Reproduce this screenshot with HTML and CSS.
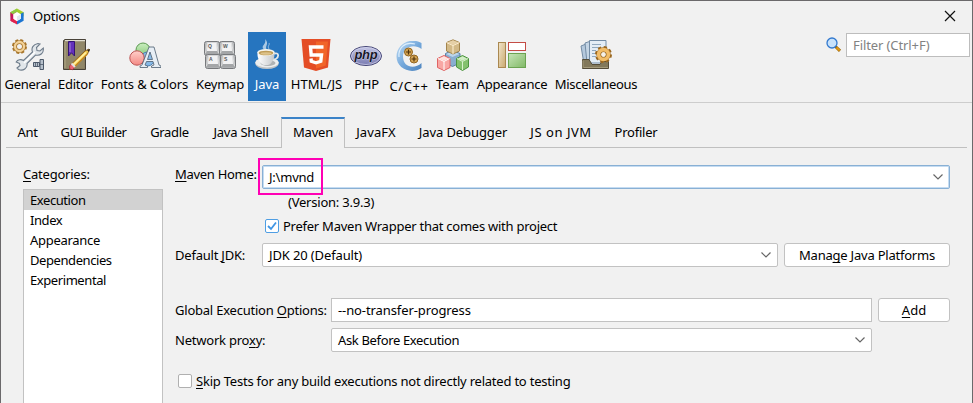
FILE: index.html
```
<!DOCTYPE html>
<html lang="en">
<head>
<meta charset="utf-8">
<title>Options</title>
<link rel="stylesheet" href="styles.css">
</head>
<body>
<div class="window">
  <header class="titlebar">
    <svg class="app-icon" viewBox="0 0 16 18">
      <path d="M8 .5 1 4.500V9l7-3z" fill="#b7d32c"/>
      <path d="M8 .5 15 4.500V9L8 5z" fill="#a5cf2d"/>
      <path d="M1 4.500V13.500L5 15.500V6L8 4z" fill="#c4175c"/>
      <path d="M1 4.500 8 .5V4L3.500 6.500z" fill="#8ecb45"/>
      <path d="M1 13.500 8 17.500V14L4 11z" fill="#e1224d"/>
      <path d="M15 4.500V13.500L8 17.500V13.500L12 11V6z" fill="#1b75d2"/>
      <path d="M8 4.300 12 6.600V11.400L8 13.800 4 11.400V6.600z" fill="#fff"/>
      <path d="M8 9 12 6.600V11.400L8 13.800z" fill="#dfe9ee"/>
    </svg>
    <span class="title tight">Options</span>
    <svg class="close" viewBox="0 0 12 12"><path d="M1 1 11 11M11 1 1 11" fill="none" stroke="#111" stroke-width="1.200"/></svg>
  </header>

  <div class="toolbar">
    <nav class="sections">
      <a class="section"><svg class="icon" viewBox="0 0 32 32">
        <circle cx="7.500" cy="7.500" r="6.300" fill="none" stroke="#a8762c" stroke-width="2.400" stroke-dasharray="2.900 2.050"/>
        <circle cx="7.500" cy="7.500" r="4.400" fill="none" stroke="#a8762c" stroke-width="3.800"/>
        <circle cx="7.500" cy="7.500" r="4.500" fill="none" stroke="#f3d298" stroke-width="2.300"/>
        <path d="M5 29 8 26.500 7.500 24.500 4.200 23C5.500 20.500 9 20 11.500 21.500L20.500 13C19 9 21 5.500 26 4.500L28 5 24.500 8.500 25 11.500 28 12 31.300 9C32 14 28.500 17 23.500 16L15 24.500C16 29 11 32.500 6.500 30.500z" fill="#e1e6ea" stroke="#6e7c8b" stroke-width="1.100"/>
        <path d="M12 24 23 13" stroke="#fff" stroke-width="1.500"/>
        <path d="M21.500 23.500H27.500V27.500H21.500zM28 20.500H31.500V30.500H28z" fill="#b6c0cb" stroke="#4c596a"/>
        <path d="M23.500 23.500V27.500M25.500 23.500V27.500M28 25.500H31.500" stroke="#4c596a" stroke-width=".8"/>
      </svg><span class="label tighter">General</span></a>

      <a class="section"><svg class="icon" viewBox="0 0 32 32">
        <path d="M3.500 1.500 5 .5H25.500V30.500H3.500z" fill="#83795d" stroke="#484238"/>
        <path d="M5 1.700H25" stroke="#eeeadd" stroke-width="1.200"/>
        <path d="M4.500 3H24.500V29.500H4.500z" fill="#918768"/>
        <path d="M5 3V29" stroke="#a69c7d" stroke-width="1.500"/>
        <path d="M8.500 2.500H14.500V17L11.500 13.800 8.500 17z" fill="#6431bc" stroke="#351474"/>
        <path d="M10 4V13" stroke="#a584d7"/>
        <path d="M9.500 30.500 11.500 25 25 12 29 10 29.500 10.500 27.500 15 14 28z" fill="#f3cb50" stroke="#8b5a16" stroke-width=".9"/>
        <path d="M13 26 26 13.500" stroke="#fff0a5" stroke-width="1.600"/>
        <path d="M15 27.500 27.500 15" stroke="#c88b22" stroke-width="1.100"/>
        <path d="M9.500 27 11.500 25 15 28 12.500 30.800 9.800 30z" fill="#ec6573" stroke="#a43141" stroke-width=".8"/>
        <path d="M11.500 24.500 15 28" stroke="#e2e4e5" stroke-width="1.800"/>
        <path d="M27 11 30 10 29 13z" fill="#292522"/>
      </svg><span class="label tight">Editor</span></a>

      <a class="section"><svg class="icon" viewBox="0 0 32 32">
        <defs>
          <linearGradient id="green" x2="0" y2="1"><stop stop-color="#caeec0"/><stop offset="1" stop-color="#86c875"/></linearGradient>
          <linearGradient id="red" x2="0" y2="1"><stop stop-color="#ffd0ca"/><stop offset="1" stop-color="#f38984"/></linearGradient>
        </defs>
        <circle cx="14" cy="11" r="7" fill="url(#green)" stroke="#5b9a51"/>
        <circle cx="18.500" cy="20" r="7" fill="#86b9e6" stroke="#4c7eb0"/>
        <circle cx="8" cy="19" r="7.200" fill="url(#red)" stroke="#bc5352"/>
        <path fill-rule="evenodd" d="M20 8H25L30 26 32 27V28.500H22.500V27L25 26 24 22.500H17.500L16 26 18.500 27V28.500H11V27L13 26zM21 13 18.500 20.500H23.500z" fill="#e7eef5" stroke="#4c5e70" stroke-width=".8"/>
      </svg><span class="label snug">Fonts &amp; Colors</span></a>

      <a class="section"><svg class="icon" viewBox="0 0 32 32">
        <defs>
          <g id="key"><rect x=".5" y=".5" width="15" height="14" rx="2" fill="#b9bbbd" stroke="#77797c"/><path d="M3.500 1.500H12.500L13 10H3z" fill="#f2f2f3"/><path d="M3 10H13L15 13.500H1z" fill="#a4a6a8"/><path d="M3.500 1.500 1.500 12M12.500 1.500 14.500 12" stroke="#e4e4e4" stroke-width=".8"/></g>
        </defs>
        <use href="#key" x="0" y="2"/><use href="#key" x="15" y="2"/>
        <use href="#key" x="1" y="15"/><use href="#key" x="16" y="15"/>
        <g class="key-text"><text x="4" y="8.500">Q</text><text x="19" y="8.500">W</text><text x="5" y="21.500">A</text><text x="20" y="21.500">S</text></g>
      </svg><span class="label tight">Keymap</span></a>

      <a class="section selected"><svg class="icon" viewBox="0 0 32 32">
        <defs><linearGradient id="cup"><stop stop-color="#fff"/><stop offset="1" stop-color="#c4c7c9"/></linearGradient></defs>
        <path d="M14 11C8 7 16 6 14 0 19 5 13 7 16 11z" fill="#d8e5f0" opacity=".75"/>
        <path d="M18 10C16 7 19 6 18 4" fill="none" stroke="#d8e5f0" opacity=".6"/>
        <ellipse cx="16" cy="24.500" rx="11.700" ry="5.500" fill="#bfc3c5"/>
        <ellipse cx="16" cy="23.500" rx="11.700" ry="5" fill="#eceeee"/>
        <ellipse cx="17" cy="24" rx="7.500" ry="3" fill="#aeb2b4"/>
        <path d="M22 15C29 12 29 20 21 21" fill="none" stroke="#e4e7e8" stroke-width="1.800"/>
        <path d="M6.500 13.500H23.500C24 19 21 25 17 26H13C9 25 6 19 6.500 13.500z" fill="url(#cup)"/>
        <ellipse cx="15" cy="13.500" rx="8.700" ry="3.400" fill="#f5f4ed"/>
        <ellipse cx="15" cy="14" rx="7.300" ry="2.300" fill="#bf9c57"/>
        <ellipse cx="15" cy="14.500" rx="5.500" ry="1.300" fill="#ddc28a"/>
      </svg><span class="label even">Java</span></a>

      <a class="section"><svg class="icon shift-left" viewBox="0 0 32 32">
        <path d="M1.500 0H30.500L28 28.500 16 32 4 28.500z" fill="#e44d26"/>
        <path d="M16 2.500H28L25.700 26.500 16 29.500z" fill="#f16529"/>
        <path d="M23.500 8H10.500L11.200 16H21.500L20.800 22.300 16 23.800 11.300 22.300 11 19.500" fill="none" stroke="#fff" stroke-width="3.400"/>
      </svg><span class="label wide">HTML/JS</span></a>

      <a class="section"><svg class="icon shift-left" viewBox="0 0 32 32">
        <defs><linearGradient id="php" x2="0" y2="1"><stop stop-color="#c4c6e6"/><stop offset="1" stop-color="#7779af"/></linearGradient></defs>
        <ellipse cx="16" cy="17" rx="15.500" ry="9.500" fill="url(#php)" stroke="#444575"/>
        <ellipse cx="16" cy="17" rx="14.500" ry="8.500" fill="none" stroke="#d6d7ef" stroke-width=".7"/>
        <text class="php-text" x="16" y="20">php</text>
      </svg><span class="label tight">PHP</span></a>

      <a class="section lower"><svg class="icon" viewBox="0 0 32 32">
        <defs><linearGradient id="cee" x2="1" y2="1"><stop stop-color="#c3def5"/><stop offset=".5" stop-color="#75a9dc"/><stop offset="1" stop-color="#4c83be"/></linearGradient></defs>
        <path d="M28.500 1V8C22 2.500 10 5 10 15.500S21 29 28.500 22V27C18 34 3.500 27.500 3.500 15.500S17-4.500 28.500 2z" fill="url(#cee)"/>
        <path d="M22 3C11 0 5 8 6 16" fill="none" stroke="#dceefd" stroke-width="1.200"/>
        <g fill="#d5a554" stroke="#916520"><circle cx="15.500" cy="11" r="4"/><circle cx="21" cy="18" r="4"/></g>
        <path d="M13 11H18M15.500 8.500V13.500M18.500 18H23.500M21 15.500V20.500" stroke="#51340c" stroke-width="1.200"/>
      </svg><span class="label wider">C/C++</span></a>

      <a class="section"><svg class="icon" viewBox="0 0 32 32">
        <g stroke-linejoin="round">
          <path d="M8.500 14.500 15.500 11.500 23 14.500V24L15.500 27.500 8.500 24z" fill="#89aed0" stroke="#587fa5"/>
          <path d="M9 15 15.500 18 22.500 15 15.500 12z" fill="#bbd5eb"/>
          <g stroke="#a3854c"><path d="M9.500 3.500 16 .8 22.500 3.500V12L16 15 9.500 12z" fill="#d2b987"/><path d="M16 6.500V15M9.500 3.500 16 6.500 22.500 3.500" fill="none" stroke="#fff1d3"/><path d="M10.500 3.500 16 1.300 21.500 3.500 16 6z" fill="#e5d0a7" stroke="none"/></g>
          <g stroke="#e06464"><path d="M.5 19.500 7 16.500 13 19.500V28.500L7 31.500.5 28.500z" fill="#f8a7a4"/><path d="M1 19.500 7 22.500 12.500 19.500M7 22.500V31" fill="none" stroke="#fff"/><path d="M2 19.500 7 17.200 11.500 19.500 7 21.800z" fill="#ffe2de" stroke="none"/></g>
          <g stroke="#4c9440"><path d="M19.500 19.500 25.500 16.500 31.500 19.500V28L25.500 31.500 19.500 28z" fill="#84c16e"/><path d="M20 19.500 25.500 22.500 31 19.500M25.500 22.500V31" fill="none" stroke="#d9f3ce"/><path d="M21 19.500 25.500 17.300 30 19.500 25.500 21.700z" fill="#d2edc6" stroke="none"/></g>
        </g>
      </svg><span class="label even">Team</span></a>

      <a class="section"><svg class="icon" viewBox="0 0 32 32">
        <defs><linearGradient id="tan" x2="1" y2="1"><stop stop-color="#f2e5ca"/><stop offset="1" stop-color="#c9a970"/></linearGradient><linearGradient id="lawn" x2="1" y2="1"><stop stop-color="#c7e5b8"/><stop offset="1" stop-color="#80b966"/></linearGradient></defs>
        <rect x="2.500" y="3.500" width="7" height="25" fill="url(#tan)" stroke="#aa8850"/>
        <rect x="12.500" y="3.500" width="17" height="8" fill="#fff" stroke="#c44c45"/>
        <rect x="12.500" y="14.500" width="17" height="14" fill="url(#lawn)" stroke="#6ba351"/>
      </svg><span class="label tight">Appearance</span></a>

      <a class="section"><svg class="icon" viewBox="0 0 32 32">
        <path d="M1 7 6 5 9 25H4z" fill="#b5c9dd" stroke="#738ca5"/>
        <path d="M5 4 11 2 12 24H7z" fill="#c4d5e5" stroke="#738ca5"/>
        <path d="M9.500 1.500H26V24H9.500z" fill="#e4edf5" stroke="#738ca5"/>
        <path d="M12 5.500H21M12 8.500H19M12 11.500H16M12 14.500H15M12 17.500H16" stroke="#91a9bf"/>
        <path d="M2.500 20.500H9L12 25.500H20L22 22.500H28.500V29.500H2.500z" fill="#82785a" stroke="#544c38"/>
        <path d="M3 21.500V29M4 28.500H28" stroke="#a49a7b"/>
        <circle cx="23.500" cy="15.500" r="7.300" fill="none" stroke="#9b6820" stroke-width="2.400" stroke-dasharray="3.200 2.533"/>
        <circle cx="23.500" cy="15.500" r="4.700" fill="none" stroke="#9b6820" stroke-width="5"/>
        <circle cx="23.500" cy="15.500" r="4.900" fill="none" stroke="#f2bd68" stroke-width="3.600"/>
        <circle cx="23.500" cy="15.500" r="2.200" fill="#f7f1e6"/>
      </svg><span class="label tighter">Miscellaneous</span></a>
    </nav>
    <div class="search">
      <svg class="magnifier" viewBox="0 0 16 16">
        <path d="M9.500 9.500 14 13.800" stroke="#9a6508" stroke-width="3"/><path d="M10.500 10.500 13.700 13.500" stroke="#e29a14" stroke-width="1.800"/>
        <circle cx="6" cy="6" r="5" fill="#c8e2fb" stroke="#3279cf" stroke-width="1.300"/>
      </svg>
      <div class="filter snug">Filter (Ctrl+F)</div>
    </div>
  </div>

  <nav class="tabs">
    <a class="tab tighter">Ant</a><a class="tab tightest">GUI Builder</a><a class="tab tighter">Gradle</a><a class="tab tight">Java Shell</a><a class="tab current tight">Maven</a><a class="tab wide">JavaFX</a><a class="tab snug">Java Debugger</a><a class="tab wider">JS on JVM</a><a class="tab tight">Profiler</a>
  </nav>

  <main class="content">
    <aside class="categories">
      <div class="heading tight"><u>C</u>ategories:</div>
      <ul class="list">
        <li class="active tightest">Execution</li>
        <li class="tightest">Index</li>
        <li class="tighter">Appearance</li>
        <li class="tightest">Dependencies</li>
        <li class="tightest">Experimental</li>
      </ul>
    </aside>

    <section class="form">
      <div class="row home">
        <label class="tighter"><u>M</u>aven Home:</label>
        <div class="combo focused"><span class="tight">J:\mvnd</span><svg class="chevron" viewBox="0 0 10 6"><path d="M.5.500 5 5 9.500.500"/></svg><div class="highlight"></div></div>
      </div>
      <div class="version tight">(Version: 3.9.3)</div>
      <div class="check wrapper"><span class="box on"><svg viewBox="0 0 14 14"><path d="M3 7 6 10 11 3.500"/></svg></span><span class="wrapper-text">Prefer Maven Wrapper that comes with project</span></div>
      <div class="row jdk">
        <label class="tight">Default <u>J</u>DK:</label>
        <div class="combo"><span class="jdk-name">JDK 20 (Default)</span><svg class="chevron" viewBox="0 0 10 6"><path d="M.5.500 5 5 9.500.500"/></svg></div>
        <div class="button manage tight">Mana<u>g</u>e Java Platforms</div>
      </div>
      <div class="row options">
        <label class="tight">Global Execution <u>O</u>ptions:</label>
        <div class="field snug">--no-transfer-progress</div>
        <div class="button add"><span><u>A</u>dd</span></div>
      </div>
      <div class="row proxy">
        <label class="tight">Network pro<u>x</u>y:</label>
        <div class="combo"><span class="ask">Ask Before Execution</span><svg class="chevron" viewBox="0 0 10 6"><path d="M.5.500 5 5 9.500.500"/></svg></div>
      </div>
      <div class="check skip"><span class="box"></span><span class="tight"><u>S</u>kip Tests for any build executions not directly related to testing</span></div>
    </section>
  </main>
</div>
</body>
</html>
```
FILE: styles.css
```
* { box-sizing: border-box; }
html, body { margin: 0; height: 403px; overflow: hidden; }
body { font: 13px/20px "Noto Sans", "Open Sans", sans-serif; color: #000; }
svg { display: block; flex: none; }
u { text-decoration-thickness: 1px; text-underline-offset: 2px; text-decoration-skip-ink: none; }

.window { width: 973px; height: 403px; background: #f1f1f1; border: 1px solid #6b696b; border-bottom: 0; display: flex; flex-direction: column; }

/* letter spacing steps */
.tightest { letter-spacing: -.42px; }
.tighter { letter-spacing: -.3px; }
.tight { letter-spacing: -.22px; }
.snug { letter-spacing: -.1px; }
.even { letter-spacing: -.02px; }
.wide { letter-spacing: .08px; }
.wider { letter-spacing: .53px; }

.titlebar { height: 31px; flex: none; display: flex; align-items: center; padding: 0 16px 0 8px; }
.app-icon { width: 16px; height: 17px; }
.title { margin: -1px 0 0 8px; flex: 1; }
.close { width: 12px; height: 12px; margin-top: -1px; }

.toolbar { height: 71px; flex: none; display: flex; justify-content: space-between; border-bottom: 1px solid #cdcdcd; }
.sections { display: grid; grid-template-columns: 53px 43px 95px 56px 38px 61px 39px 46px 41px 78px 90px; height: 69px; }
.section { display: flex; flex-direction: column; align-items: center; padding-top: 7px; gap: 3px; white-space: nowrap; }
.section.selected { background: #2675bf; color: #fff; }
.section.lower { padding-top: 9px; }
.icon { width: 32px; height: 32px; }
.icon.shift-left { margin-right: 2px; }
.key-text { font: bold 5px "Liberation Sans", sans-serif; fill: #55575a; }
.php-text { font: italic bold 13px "Liberation Sans", sans-serif; fill: #171729; stroke: #e2e3f2; stroke-width: .7px; paint-order: stroke; text-anchor: middle; letter-spacing: -.2px; }

.search { display: flex; padding: 1px 2px 0 0; gap: 4px; }
.magnifier { width: 16px; height: 16px; margin-top: 4px; }
.filter { width: 124px; height: 24px; background: #fff; border: 1px solid #bdbdbd; color: #828282; padding: 0 6px; line-height: 22px; }

.tabs { height: 31px; flex: none; margin: 14px 5px 0; display: grid; grid-template-columns: 43px 89px 63px 80px 64px 62px 112px 84px 66px 1fr; }
.tabs::after { content: ""; border-bottom: 1px solid #c0c0c0; }
.tab { border-bottom: 1px solid #c0c0c0; text-align: center; line-height: 30px; white-space: nowrap; }
.tab.current { border: 1px solid #c0c0c0; border-top: 2px solid #3b83c8; border-bottom: 0; line-height: 27px; }

.content { flex: 1; min-height: 0; display: flex; padding-left: 22px; }
.categories { width: 140px; display: flex; flex-direction: column; padding-top: 16px; }
.heading { height: 25px; line-height: 20px; }
.list { flex: 1; margin: 0; padding: 0; list-style: none; background: #fff; border: 1px solid #c2c2c2; border-bottom: 0; }
.list li { height: 20px; padding-left: 6px; }
.list .active { background: #d2d2d2; }

.form { width: 775px; margin-left: 12px; padding-top: 17px; }
.row { display: flex; height: 24px; }
.row label { line-height: 24px; white-space: nowrap; width: 87px; flex: none; }
.combo, .field, .button { height: 24px; background: #fff; border: 1px solid #c2c2c2; line-height: 22px; white-space: nowrap; }
.combo { flex: 1; display: flex; align-items: center; justify-content: space-between; padding: 0 6px; border-radius: 2px; position: relative; }
.chevron { width: 10px; height: 6px; }
.chevron path { fill: none; stroke: #666; stroke-width: 1.2; }
.combo.focused { border-color: #89b0d4; box-shadow: inset 0 0 0 1px #c5dcf2; }
.home label { line-height: 18px; }
.highlight { position: absolute; left: -5px; top: -8px; width: 65px; height: 37px; border: 2px solid #ff00b4; }
.version { padding-left: 113px; margin-top: 3px; height: 20px; }
.check { display: flex; align-items: center; gap: 4px; height: 20px; white-space: nowrap; }
.wrapper { padding-left: 90px; margin-top: 4px; }
.wrapper-text { letter-spacing: -.25px; }
.box { width: 14px; height: 14px; background: #fff; border: 1px solid #b0b0b0; border-radius: 2px; }
.box.on { border-color: #4f9ee3; }
.box svg { width: 14px; height: 14px; margin: -1px; }
.box path { fill: none; stroke: #3f95e4; stroke-width: 1.8; }
.jdk { margin-top: 7px; }
.jdk .combo { flex: none; width: 516px; }
.jdk-name { letter-spacing: -.13px; }
.button { border-radius: 3px; text-align: center; margin-left: 6px; }
.manage { width: 166px; }
.options { margin-top: 31px; }
.options label, .proxy label { width: 156px; }
.field { width: 541px; padding: 0 6px; }
.add { width: 72px; }
.proxy { margin-top: 6px; }
.proxy .combo { flex: none; width: 541px; }
.ask { letter-spacing: -.35px; }
.skip { margin-top: 19px; padding-left: 3px; }
```
